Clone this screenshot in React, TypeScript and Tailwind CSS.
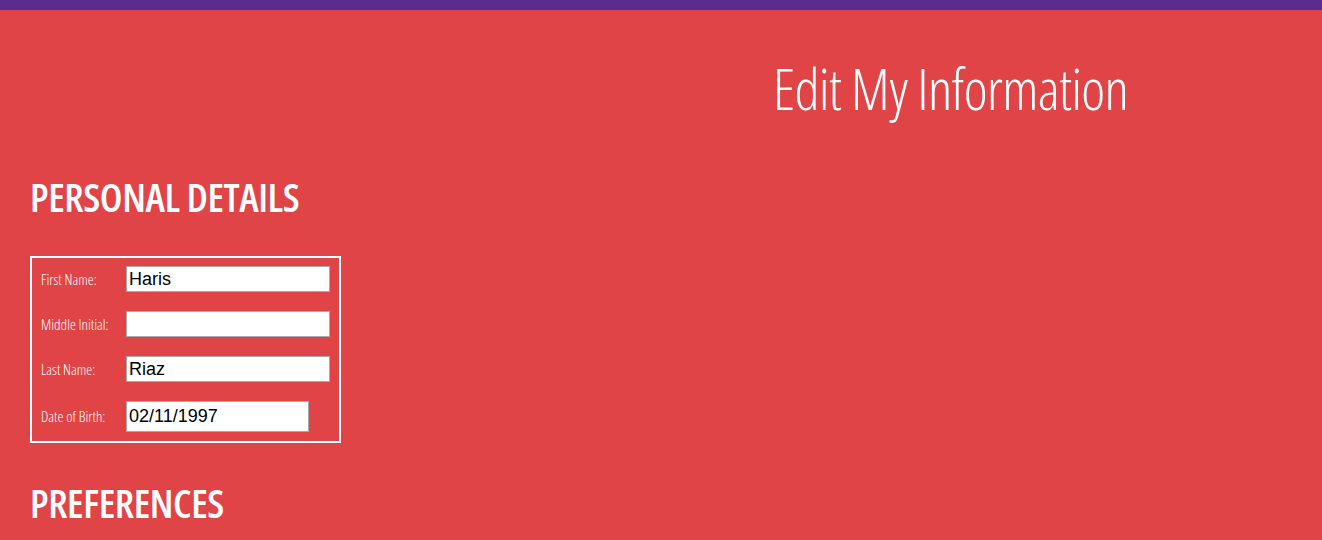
const rows: { label: string; value: string; wide: boolean }[] = [
  { label: "First Name:", value: "Haris", wide: true },
  { label: "Middle Initial:", value: "", wide: true },
  { label: "Last Name:", value: "Riaz", wide: true },
  { label: "Date of Birth:", value: "02/11/1997", wide: false },
];

export default function App() {
  return (
    <div className="min-h-[540px] bg-[#e04446] text-white">
      <div className="h-[10px] bg-[#5a2d8c]" />
      <div className="pl-[773px] pt-[50px]">
        <h1 className="text-[57px] leading-none font-light tracking-[-0.7px] [font-family:'Open_Sans',sans-serif] [font-stretch:condensed]">
          Edit My Information
        </h1>
      </div>
      <div className="pl-[30px]">
        <h2 className="mt-[60px] text-[40px] leading-none font-[550] tracking-[-0.4px] [font-family:'Open_Sans',sans-serif] [font-stretch:condensed]">
          PERSONAL DETAILS
        </h2>
        <div className="mt-[39px] w-[311px] border-2 border-white px-[9px] pt-[8px] pb-[9px] flex flex-col gap-[19px]">
          {rows.map((r) => (
            <div key={r.label} className="flex items-center">
              <label className="w-[85px] text-[15px] font-light [font-family:'Open_Sans',sans-serif] [font-stretch:condensed]">
                {r.label}
              </label>
              <input
                type="text"
                defaultValue={r.value}
                className={`bg-white text-black border border-[#a9a9a9] px-[2px] text-[18px] [font-family:'Liberation_Sans',Arial,sans-serif] outline-none ${
                  r.wide ? "w-[204px] h-[26px]" : "w-[183px] h-[31px]"
                }`}
              />
            </div>
          ))}
        </div>
        <h2 className="mt-[40px] text-[40px] leading-none font-[550] tracking-[-0.4px] [font-family:'Open_Sans',sans-serif] [font-stretch:condensed]">
          PREFERENCES
        </h2>
      </div>
    </div>
  );
}
